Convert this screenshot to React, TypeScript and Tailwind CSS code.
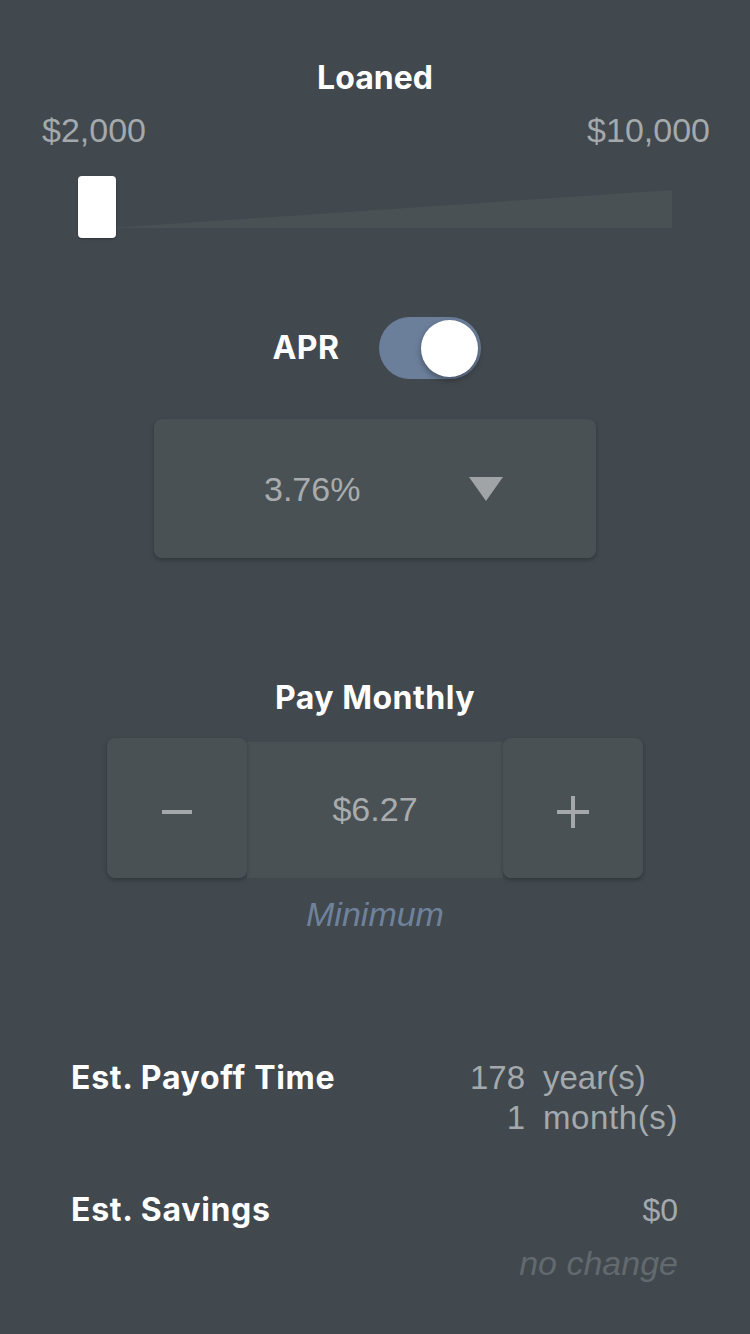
import React from "react";

export default function App() {
  const inter = { fontFamily: "Inter, Roboto, sans-serif" };
  const helv = { fontFamily: "'Liberation Sans', Arial, sans-serif" };
  return (
    <div className="w-[750px] h-[1334px] bg-[#41484e] overflow-hidden" style={helv}>
      {/* Loaned */}
      <div className="pt-[58px] flex flex-col items-center">
        <div className="text-[32px] font-bold text-white leading-[40px]" style={inter}>Loaned</div>
      </div>
      <div className="flex justify-between pl-[42px] pr-[40px] mt-[12px] text-[34px] text-[#a4a9ac] leading-[40px]">
        <span>$2,000</span>
        <span>$10,000</span>
      </div>
      {/* slider */}
      <div className="relative h-[62px] mt-[26px] mx-[78px]">
        <svg className="absolute left-0 top-0" width="594" height="62" viewBox="0 0 594 62">
          <polygon points="30,52 594,14 594,52" fill="#4a5154" />
        </svg>
        <div className="absolute left-0 top-0 w-[38px] h-[62px] bg-white rounded-[4px] shadow-[0_1px_2px_rgba(0,0,0,0.3)]" />
      </div>
      {/* APR */}
      <div className="flex items-center justify-center mt-[79px] gap-[39px] pl-[3px]">
        <span className="text-[32px] font-bold text-white leading-[40px] tracking-[0.5px]" style={inter}>APR</span>
        <div className="relative w-[102px] h-[62px] rounded-full bg-[#6b7f9b] flex items-center justify-end pr-[3px]">
          <div className="w-[57px] h-[57px] rounded-full bg-white shadow-[0_3px_6px_rgba(0,0,0,0.35)]" />
        </div>
      </div>
      {/* dropdown */}
      <div className="flex justify-center mt-[40px]">
        <div className="w-[442px] h-[139px] bg-[#4a5154] rounded-[8px] shadow-[0_2px_4px_rgba(0,0,0,0.25)] flex items-center">
          <span className="ml-[110px] text-[34px] text-[#a8acae] leading-[40px]">3.76%</span>
          <svg className="ml-[109px]" width="34" height="24" viewBox="0 0 34 24">
            <polygon points="0,0 34,0 17,24" fill="#a0a4a6" />
          </svg>
        </div>
      </div>
      {/* Pay Monthly */}
      <div className="flex justify-center mt-[120px]">
        <span className="text-[32px] font-bold text-white leading-[40px] tracking-[0.5px]" style={inter}>Pay Monthly</span>
      </div>
      <div className="flex justify-center mt-[20px]">
        <div className="flex items-end">
          <div className="w-[140px] h-[140px] bg-[#4a5154] rounded-[8px] shadow-[0_2px_4px_rgba(0,0,0,0.25)] flex items-center justify-center relative z-10">
            <div className="w-[30px] h-[4px] bg-[#a4a8aa] mt-[8px]" />
          </div>
          <div className="w-[256px] h-[136px] bg-[#4a5154] flex items-center justify-center">
            <span className="text-[34px] text-[#a8acae] leading-[40px] -mt-[2px]">$6.27</span>
          </div>
          <div className="w-[140px] h-[140px] bg-[#4a5154] rounded-[8px] shadow-[0_2px_4px_rgba(0,0,0,0.25)] flex items-center justify-center relative z-10">
            <svg className="mt-[8px]" width="32" height="32" viewBox="0 0 32 32">
              <rect x="14" y="0" width="4" height="32" fill="#a4a8aa" />
              <rect x="0" y="14" width="32" height="4" fill="#a4a8aa" />
            </svg>
          </div>
        </div>
      </div>
      <div className="flex justify-center mt-[16px]">
        <span className="text-[34px] italic text-[#6f829c] leading-[40px]">Minimum</span>
      </div>
      {/* Payoff */}
      <div className="flex justify-between pl-[71px] pr-[72px] mt-[124px]">
        <span className="text-[32px] font-bold text-white leading-[40px] tracking-[0.7px]" style={inter}>Est. Payoff Time</span>
        <div className="grid grid-cols-[auto_135px] gap-x-[18px] text-[33px] text-[#a4a9ac] leading-[40px]">
          <span className="text-right">178</span>
          <span>year(s)</span>
          <span className="text-right">1</span>
          <span className="tracking-[0.6px]">month(s)</span>
        </div>
      </div>
      <div className="flex justify-between pl-[71px] pr-[72px] mt-[52px]">
        <span className="text-[32px] font-bold text-white leading-[40px] tracking-[0.7px]" style={inter}>Est. Savings</span>
        <div className="flex flex-col items-end">
          <span className="text-[32px] text-[#a4a9ac] leading-[40px]">$0</span>
          <span className="text-[34px] italic text-[#626a6e] leading-[40px] mt-[13px]">no change</span>
        </div>
      </div>
    </div>
  );
}
